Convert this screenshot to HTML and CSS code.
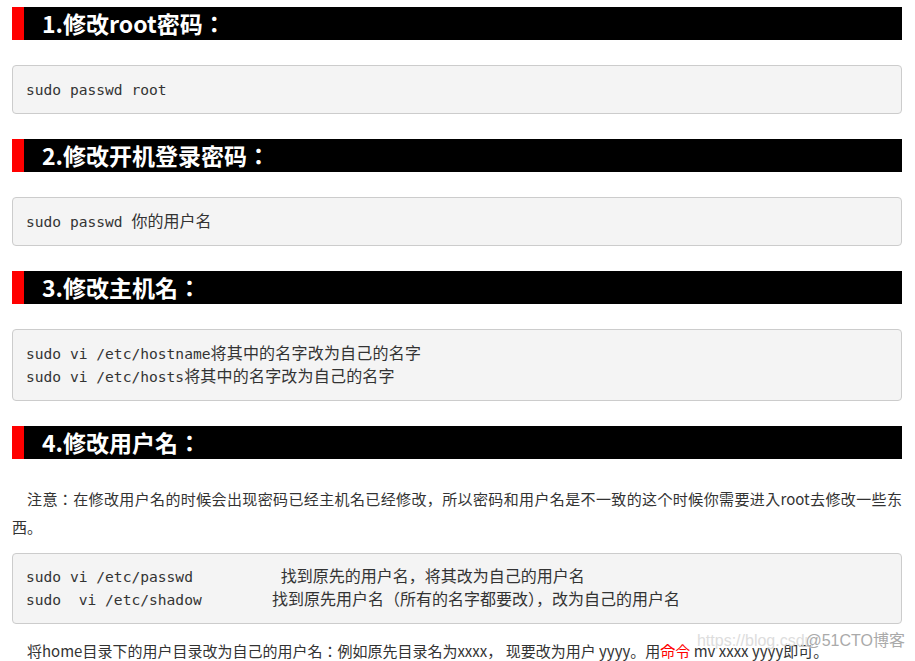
FILE: index.html
```html
<!DOCTYPE html>
<html lang="zh-CN">
<head>
    <meta charset="UTF-8">
    <meta name="viewport" content="width=device-width, initial-scale=1.0">
    <title>修改root密码和用户名</title>
    <link rel="stylesheet" href="styles.css">
</head>
<body>
    <div class="article">
        <h2 class="step">1.修改root密码：</h2>
        <pre class="code">sudo passwd root</pre>

        <h2 class="step">2.修改开机登录密码：</h2>
        <pre class="code">sudo passwd <span class="zh">你的用户名</span></pre>

        <h2 class="step">3.修改主机名：</h2>
        <pre class="code">sudo vi /etc/hostname<span class="zh wide">将其中的名字改为自己的名字</span>
sudo vi /etc/hosts<span class="zh wide">将其中的名字改为自己的名字</span></pre>

        <h2 class="step">4.修改用户名：</h2>
        <p class="note first">注意：在修改用户名的时候会出现密码已经主机名已经修改，所以密码和用户名是不一致的这个时候你需要进入root去修改一些东西。</p>
        <pre class="code tight">sudo vi /etc/passwd          <span class="zh">找到原先的用户名，将其改为自己的用户名</span>
sudo  vi /etc/shadow        <span class="zh">找到原先用户名（所有的名字都要改），改为自己的用户名</span></pre>
        <div class="last">
            <p class="note">将home目录下的用户目录改为自己的用户名：例如原先目录名为xxxx， 现要改为用户 yyyy。用<span class="red">命令</span> mv xxxx yyyy即可。</p>
            <div class="watermark"><span class="url">https://blog.csdn</span><span class="brand">@51CTO博客</span></div>
        </div>
    </div>
</body>
</html>
```

FILE: styles.css
```css
body {
    margin: 0;
    padding: 7px 13px 0 12px;
    background: #fff;
    color: #333;
    font-family: "Noto Sans CJK JP", "Liberation Sans", sans-serif;
}

.step {
    margin: 0 0 25px;
    height: 33px;
    line-height: 33px;
    background: #000;
    border-left: 12px solid #f00;
    padding-left: 18px;
    color: #fff;
    font-size: 23px;
    font-weight: bold;
    font-feature-settings: "locl" 0;
}

.code {
    margin: 0 0 25px;
    padding: 12px 13px;
    background: #f4f4f4;
    border: 1px solid #ccc;
    border-radius: 4px;
    font-family: "DejaVu Sans Mono", "Noto Sans CJK SC", monospace;
    font-size: 14.6px;
    line-height: 23px;
    color: #333;
    white-space: pre;
}

.code.tight {
    margin: 12px 0 13px;
    padding: 11px 13px 12px;
}

.code .zh {
    font-family: "Noto Sans CJK SC", sans-serif;
    font-size: 16px;
    line-height: 16px;
}

.code .zh.wide {
    letter-spacing: 0.2px;
}

.note {
    margin: 0;
    font-size: 15px;
    line-height: 28px;
    text-indent: 15px;
    text-align: justify;
    font-feature-settings: "locl" 0;
}

.note.first {
    margin-top: 26px;
}

.red {
    color: #f00;
}

.last {
    position: relative;
}

.watermark {
    position: absolute;
    right: -3px;
    top: -6px;
    font-family: "Liberation Sans", "Noto Sans CJK SC", sans-serif;
    font-size: 16px;
    line-height: 20px;
    white-space: nowrap;
}

.watermark .url {
    color: #ddd;
}

.watermark .brand {
    margin-left: -8px;
    color: #aaa;
    text-shadow: 0 0 2px #fff, 0 0 2px #fff;
}
```
